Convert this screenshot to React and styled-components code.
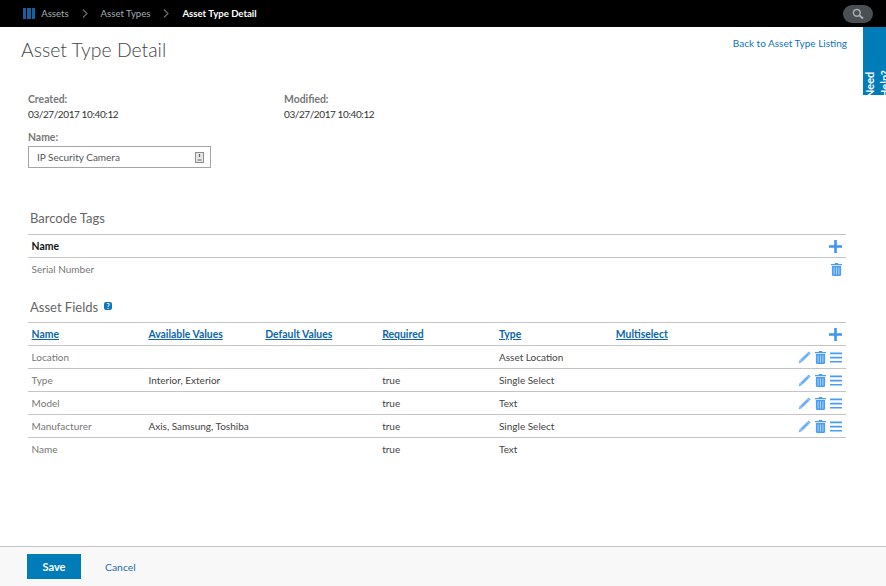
import React from 'react';
import styled, { createGlobalStyle } from 'styled-components';

const GlobalStyle = createGlobalStyle`
  html, body {
    margin: 0;
    height: 100%;
    background: #fff;
  }
  body {
    font-family: "Lato", "Noto Sans", sans-serif;
    font-size: 10px;
    color: #444;
  }
`;

const barcodeRows = [{ name: 'Serial Number' }];

const fieldColumns = ['Name', 'Available Values', 'Default Values', 'Required', 'Type', 'Multiselect'];

const fieldRows = [
  { name: 'Location', values: '', required: '', type: 'Asset Location', editable: true },
  { name: 'Type', values: 'Interior, Exterior', required: 'true', type: 'Single Select', editable: true },
  { name: 'Model', values: '', required: 'true', type: 'Text', editable: true },
  { name: 'Manufacturer', values: 'Axis, Samsung, Toshiba', required: 'true', type: 'Single Select', editable: true },
  { name: 'Name', values: '', required: 'true', type: 'Text', editable: false },
];

const ICON_BLUE = '#4a9cf6';

function PlusIcon() {
  return (
    <svg width="13" height="13" viewBox="0 0 13 13">
      <path d="M5.2 0h2.6v5.2H13v2.6H7.8V13H5.2V7.8H0V5.2h5.2z" fill="#3f94f0" />
    </svg>
  );
}

function TrashIcon() {
  return (
    <svg width="11" height="13" viewBox="0 0 11 13">
      <path d="M4 0h3l.5 1H11v1.3H0V1h3.5zM.9 3h9.2v8.8c0 .7-.5 1.2-1.2 1.2H2.1c-.7 0-1.2-.5-1.2-1.2z" fill={ICON_BLUE} />
      <path d="M3.1 4.4v7.2M5.5 4.4v7.2M7.9 4.4v7.2" stroke="#b9d8fb" strokeWidth="0.9" />
    </svg>
  );
}

function PencilIcon() {
  return (
    <svg width="13" height="13" viewBox="0 0 13 13">
      <path d="M10.6.4l2 2-8.9 8.9-3.2 1.2 1.2-3.2z" fill={ICON_BLUE} opacity="0.8" />
      <path d="M2 8.6l2.4 2.4M9.4 1.8l1.8 1.8" stroke="#d5e7fc" strokeWidth="0.7" />
    </svg>
  );
}

function BarsIcon() {
  return (
    <svg width="12" height="11" viewBox="0 0 12 11">
      <path d="M0 .5h12v1.7H0zM0 4.7h12v1.7H0zM0 8.9h12v1.7H0z" fill={ICON_BLUE} />
    </svg>
  );
}

function CrumbChevron() {
  return (
    <Chevron>
      <svg width="6" height="9" viewBox="0 0 6 9">
        <path d="M1 .5l4 4-4 4" fill="none" stroke="#6b6b6b" strokeWidth="1.2" />
      </svg>
    </Chevron>
  );
}

function FieldRow({ row }) {
  return (
    <tr>
      <NameCell>{row.name}</NameCell>
      <Cell>{row.values}</Cell>
      <Cell />
      <Cell>{row.required}</Cell>
      <Cell>{row.type}</Cell>
      <Cell />
      <ActionCell>
        {row.editable && (
          <Actions>
            <PencilIcon />
            <TrashIcon />
            <BarsIcon />
          </Actions>
        )}
      </ActionCell>
    </tr>
  );
}

export default function App() {
  return (
    <Page>
      <GlobalStyle />
      <TopBar>
        <Logo>
          <LogoBar />
          <LogoBar />
          <LogoBar />
        </Logo>
        <Crumb>Assets</Crumb>
        <CrumbChevron />
        <Crumb>Asset Types</Crumb>
        <CrumbChevron />
        <Crumb $current>Asset Type Detail</Crumb>
        <SearchButton>
          <svg width="12" height="12" viewBox="0 0 12 12">
            <circle cx="4.8" cy="4.8" r="3.4" fill="none" stroke="#a9adb1" strokeWidth="1.5" />
            <path d="M7.5 7.5l3.6 3" stroke="#a9adb1" strokeWidth="2" />
          </svg>
        </SearchButton>
      </TopBar>

      <Main>
        <HelpTab>
          <span>Need Help?</span>
        </HelpTab>
        <TitleRow>
          <Title>Asset Type Detail</Title>
          <BackLink href="#">Back to Asset Type Listing</BackLink>
        </TitleRow>

        <MetaGrid>
          <div>
            <Label>Created:</Label>
            <MetaValue>03/27/2017 10:40:12</MetaValue>
          </div>
          <div>
            <Label>Modified:</Label>
            <MetaValue>03/27/2017 10:40:12</MetaValue>
          </div>
        </MetaGrid>

        <NameLabel>Name:</NameLabel>
        <InputBox>
          <span>IP Security Camera</span>
          <svg width="9" height="11" viewBox="0 0 9 11">
            <rect x="0.5" y="0.5" width="8" height="10" fill="#e6e6e6" stroke="#8d8d8d" />
            <path d="M4.5 2v3M2.5 8h4" stroke="#666" strokeWidth="1.2" />
          </svg>
        </InputBox>

        <SectionTitle $top={43}>Barcode Tags</SectionTitle>
        <DataTable>
          <thead>
            <tr>
              <HeadCell>Name</HeadCell>
              <PlusCell>
                <PlusIcon />
              </PlusCell>
            </tr>
          </thead>
          <tbody>
            {barcodeRows.map(row => (
              <tr key={row.name}>
                <NameCell>{row.name}</NameCell>
                <ActionCell>
                  <Actions>
                    <TrashIcon />
                  </Actions>
                </ActionCell>
              </tr>
            ))}
          </tbody>
        </DataTable>

        <SectionTitle $top={20}>
          Asset Fields
          <HelpBadge>?</HelpBadge>
        </SectionTitle>
        <FieldsTable>
          <thead>
            <tr>
              {fieldColumns.map(col => (
                <HeadCell key={col}>
                  <SortLink href="#">{col}</SortLink>
                </HeadCell>
              ))}
              <PlusCell>
                <PlusIcon />
              </PlusCell>
            </tr>
          </thead>
          <tbody>
            {fieldRows.map(row => (
              <FieldRow key={row.name} row={row} />
            ))}
          </tbody>
        </FieldsTable>
      </Main>

      <Footer>
        <SaveButton>Save</SaveButton>
        <CancelLink href="#">Cancel</CancelLink>
      </Footer>
    </Page>
  );
}

// Component Styles
const Page = styled.div`
  height: 100vh;
  display: flex;
  flex-direction: column;
  overflow: hidden;
`;

const TopBar = styled.header`
  height: 27px;
  flex: none;
  background: #000;
  display: flex;
  align-items: center;
  padding: 0 13px 0 23px;
`;

const Logo = styled.div`
  display: flex;
  gap: 1px;
  margin-right: 6px;
`;

const LogoBar = styled.span`
  width: 3.4px;
  height: 11px;
  background: #17609f;
`;

const Crumb = styled.span`
  color: ${p => (p.$current ? '#fff' : '#a7adb3')};
  font-weight: ${p => (p.$current ? 700 : 400)};
  font-size: 9.6px;
`;

const Chevron = styled.span`
  display: flex;
  margin: 0 13px;
`;

const SearchButton = styled.div`
  margin-left: auto;
  width: 30px;
  height: 18px;
  border-radius: 9px;
  background: #4a4f54;
  display: flex;
  align-items: center;
  justify-content: center;
`;

const Main = styled.main`
  flex: 1;
  position: relative;
  padding: 0 39px 0 28px;
`;

const HelpTab = styled.div`
  position: absolute;
  top: 0;
  right: 0;
  width: 23px;
  height: 68px;
  background: #007db8;
  color: #fff;
  overflow: hidden;
  font-size: 11px;
  font-weight: 700;
  line-height: 15px;
  span {
    position: absolute;
    bottom: -3px;
    left: -1px;
    height: 30px;
    writing-mode: vertical-rl;
    transform: rotate(180deg);
  }
`;

const TitleRow = styled.div`
  display: flex;
  justify-content: space-between;
  align-items: flex-start;
  margin-left: -7px;
`;

const Title = styled.h1`
  margin: 9px 0 0;
  font-family: "Lato", sans-serif;
  font-size: 19.4px;
  line-height: 27px;
  font-weight: 300;
  color: #444;
`;

const BackLink = styled.a`
  margin-top: 9px;
  color: #0e76bc;
  text-decoration: none;
  line-height: 14px;
`;

const MetaGrid = styled.div`
  display: grid;
  grid-template-columns: 256px 1fr;
  margin-top: 29px;
`;

const Label = styled.div`
  color: #777;
  font-size: 10.4px;
  font-weight: 700;
  line-height: 14px;
`;

const MetaValue = styled.div`
  margin-top: 1px;
  line-height: 14px;
  color: #333;
  letter-spacing: -0.4px;
`;

const NameLabel = styled(Label)`
  margin-top: 9px;
`;

const InputBox = styled.div`
  margin-top: 2px;
  width: 183px;
  height: 22px;
  box-sizing: border-box;
  border: 1px solid #a5a5a5;
  padding: 0 6px 0 8px;
  display: flex;
  align-items: center;
  justify-content: space-between;
  color: #555;
`;

const SectionTitle = styled.h2`
  margin: ${p => p.$top}px 0 0 2px;
  font-size: 13px;
  line-height: 14px;
  font-weight: 400;
  color: #666;
  display: flex;
  align-items: center;
`;

const HelpBadge = styled.span`
  margin: 0 0 2px 6px;
  width: 8px;
  height: 8px;
  border-radius: 2px;
  background: #0e76bc;
  color: #fff;
  font-size: 7px;
  font-weight: 700;
  line-height: 8px;
  text-align: center;
`;

const DataTable = styled.table`
  width: 818px;
  margin-top: 9px;
  border-collapse: collapse;
  table-layout: fixed;
  border-top: 1px solid #c4c4c4;
  th, td {
    height: 22px;
    padding: 0 0 0 3.6px;
    border-bottom: 1px solid #c4c4c4;
    text-align: left;
  }
  tbody tr:last-child td {
    border-bottom: none;
  }
`;

const FieldsTable = styled(DataTable)`
  margin-top: 8px;
`;

const HeadCell = styled.th`
  font-size: 10.4px;
  font-weight: 700;
  color: #111;
`;

const SortLink = styled.a`
  color: #0b66a8;
  text-decoration: underline;
`;

const Cell = styled.td`
  color: #444;
`;

const NameCell = styled(Cell)`
  color: #777;
`;

const ActionCell = styled.td`
  padding-right: 4px !important;
`;

const PlusCell = styled.th`
  padding-right: 4px !important;
  text-align: right !important;
  svg {
    display: block;
    margin-left: auto;
  }
`;

const Actions = styled.div`
  display: flex;
  justify-content: flex-end;
  align-items: center;
  gap: 4px;
`;

const Footer = styled.footer`
  height: 40px;
  flex: none;
  box-sizing: border-box;
  border-top: 1px solid #c4c4c4;
  background: #f8f8f8;
  padding: 7px 0 0 27px;
  display: flex;
  align-items: flex-start;
`;

const SaveButton = styled.button`
  width: 54px;
  height: 25px;
  border: none;
  padding: 0;
  background: #007db8;
  color: #fff;
  font: 700 11px "Lato", sans-serif;
`;

const CancelLink = styled.a`
  margin: 6px 0 0 24px;
  color: #2b6cab;
  font-size: 10.4px;
  text-decoration: none;
  line-height: 14px;
`;
